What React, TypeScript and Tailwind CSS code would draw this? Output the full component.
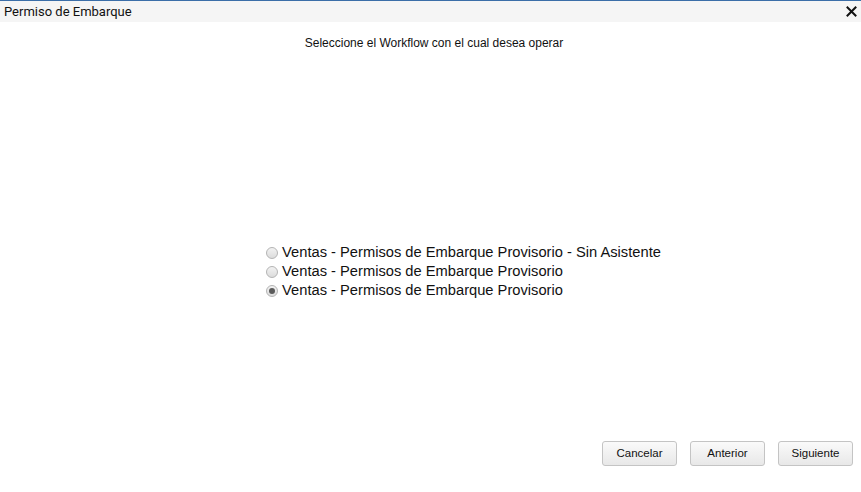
import React, { useState } from "react";

const options = [
  "Ventas - Permisos de Embarque Provisorio - Sin Asistente",
  "Ventas - Permisos de Embarque Provisorio",
  "Ventas - Permisos de Embarque Provisorio",
];

function Radio(props: { checked: boolean; label: string; onSelect: () => void }) {
  return (
    <label className="flex items-center h-[19px] cursor-pointer" onClick={props.onSelect}>
      <span className="w-[12px] h-[12px] rounded-full border border-[#b4b4b4] bg-gradient-to-b from-[#f2f2f2] to-[#dcdcdc] flex items-center justify-center mr-[4px]">
        {props.checked && <span className="w-[6px] h-[6px] rounded-full bg-[#5a5a5a]" />}
      </span>
      <span className="text-[14.7px] text-[#111]">{props.label}</span>
    </label>
  );
}

function Button(props: { children: React.ReactNode }) {
  return (
    <button className="w-[75px] h-[25px] rounded-[3px] border border-[#c4c4c4] bg-gradient-to-b from-[#fafafa] to-[#e8e8e8] text-[11.5px] text-[#111]">
      {props.children}
    </button>
  );
}

export default function App() {
  const [selected, setSelected] = useState(2);

  return (
    <div
      className="w-[861px] h-[492px] bg-white flex flex-col"
      style={{ fontFamily: '"Liberation Sans", Arial, sans-serif' }}
    >
      <div className="h-[22px] border-t-[1px] border-[#3b6ea8] bg-[#f5f5f5] flex items-center justify-between pl-[4px] pr-[4px]">
        <span className="text-[13px] text-[#111]" style={{ fontFamily: "Roboto, sans-serif" }}>
          Permiso de Embarque
        </span>
        <svg width="11" height="11" viewBox="0 0 11 11">
          <path d="M1.5 1.5 L9.5 9.5 M9.5 1.5 L1.5 9.5" stroke="#111" strokeWidth="2" strokeLinecap="square" />
        </svg>
      </div>

      <div className="text-center text-[12px] text-[#111] pt-[12px] pl-[7px]">
        Seleccione el Workflow con el cual desea operar
      </div>

      <div className="flex justify-center pl-[66px] mt-[191px]">
        <div className="flex flex-col">
          {options.map((label, i) => (
            <Radio key={i} label={label} checked={selected === i} onSelect={() => setSelected(i)} />
          ))}
        </div>
      </div>

      <div className="flex-1" />

      <div className="flex justify-end gap-[13px] pr-[8px] pb-[26px]">
        <Button>Cancelar</Button>
        <Button>Anterior</Button>
        <Button>Siguiente</Button>
      </div>
    </div>
  );
}
